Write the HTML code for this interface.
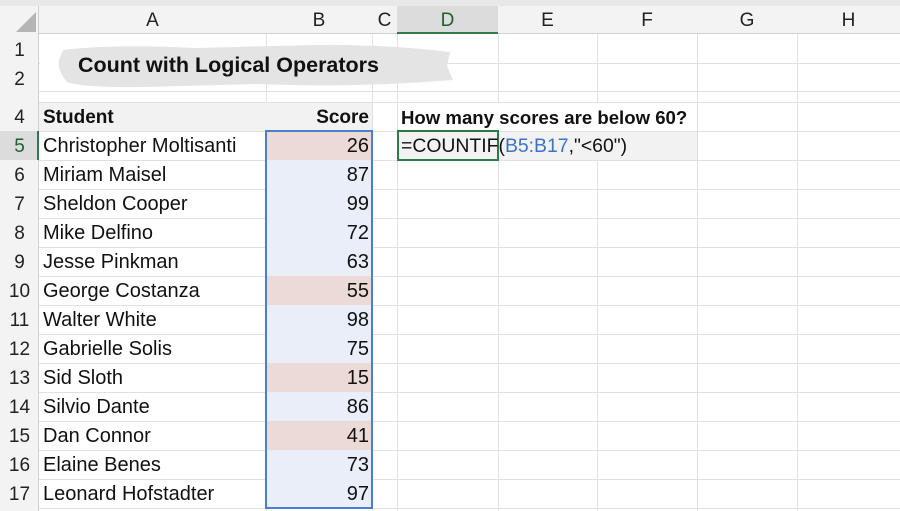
<!DOCTYPE html>
<html><head><style>
*{margin:0;padding:0;box-sizing:border-box}
body{width:900px;height:511px;overflow:hidden;background:#fff;font-family:"Liberation Sans",sans-serif;position:relative;color:#111}
.a{position:absolute}
.vl{position:absolute;top:6px;bottom:0;width:1px;background:#e1e1e1}
.hl{position:absolute;left:0;right:0;height:1px;background:#e1e1e1}
.ch{position:absolute;top:6px;height:28px;font-size:19px;line-height:30px;text-align:center;color:#222}
.rh{position:absolute;left:0;width:39px;font-size:19px;text-align:center;color:#222;height:29px;line-height:31px}
.c{position:absolute;font-size:20px;height:29px;line-height:31px;white-space:nowrap}
</style></head><body>
<div class="a" style="left:0;top:0;width:900px;height:6px;background:#e8e8e8"></div>
<div class="vl" style="left:266px"></div><div class="vl" style="left:372px"></div><div class="vl" style="left:397px"></div><div class="vl" style="left:498px"></div><div class="vl" style="left:597px"></div><div class="vl" style="left:697px"></div><div class="vl" style="left:797px"></div>
<div class="hl" style="top:63px"></div><div class="hl" style="top:91px"></div><div class="hl" style="top:102px"></div><div class="hl" style="top:131px"></div><div class="hl" style="top:160px"></div><div class="hl" style="top:189px"></div><div class="hl" style="top:218px"></div><div class="hl" style="top:247px"></div><div class="hl" style="top:276px"></div><div class="hl" style="top:305px"></div><div class="hl" style="top:334px"></div><div class="hl" style="top:363px"></div><div class="hl" style="top:392px"></div><div class="hl" style="top:421px"></div><div class="hl" style="top:450px"></div><div class="hl" style="top:479px"></div><div class="hl" style="top:508px"></div>
<div class="a" style="left:0;top:6px;width:900px;height:28px;background:#f3f3f3;border-bottom:1px solid #cfcfcf"></div>
<div class="a" style="left:0;top:6px;width:39px;height:505px;background:#f3f3f3;border-right:1px solid #cfcfcf"></div>
<div class="a" style="left:397px;top:6px;width:101px;height:28px;background:#dcdcdc;border-bottom:2px solid #2f7a48"></div>
<div class="a" style="left:0;top:131px;width:39px;height:29px;background:#dcdcdc;border-right:2px solid #2f7a48"></div>
<svg class="a" style="left:16px;top:12px" width="20" height="20"><polygon points="20,0 20,20 0,20" fill="#b5b5b5"/></svg>
<div class="a" style="left:39px;top:103px;width:333px;height:28px;background:#f2f2f2"></div>
<div class="a" style="left:398px;top:103px;width:298px;height:28px;background:#fff"></div>
<div class="a" style="left:397px;top:132px;width:300px;height:28px;background:#f2f2f2"></div>
<div class="a" style="left:266px;top:131px;width:106px;height:377px;background:#e9eef8"></div>
<div class="a" style="left:266px;top:131px;width:106px;height:29px;background:#ecdad6"></div>
<div class="a" style="left:266px;top:276px;width:106px;height:29px;background:#ecdad6"></div>
<div class="a" style="left:266px;top:363px;width:106px;height:29px;background:#ecdad6"></div>
<div class="a" style="left:266px;top:421px;width:106px;height:29px;background:#ecdad6"></div>
<div class="ch" style="left:39px;width:227px">A</div><div class="ch" style="left:266px;width:106px">B</div><div class="ch" style="left:372px;width:25px">C</div><div class="ch" style="left:397px;width:101px;color:#1e5e33">D</div><div class="ch" style="left:498px;width:99px">E</div><div class="ch" style="left:597px;width:100px">F</div><div class="ch" style="left:697px;width:100px">G</div><div class="ch" style="left:797px;width:103px">H</div>
<div class="rh" style="top:35px">1</div><div class="rh" style="top:64px;height:27px">2</div>
<div class="rh" style="top:102px">4</div><div class="rh" style="top:131px;color:#1e5e33">5</div><div class="rh" style="top:160px">6</div><div class="rh" style="top:189px">7</div><div class="rh" style="top:218px">8</div><div class="rh" style="top:247px">9</div><div class="rh" style="top:276px">10</div><div class="rh" style="top:305px">11</div><div class="rh" style="top:334px">12</div><div class="rh" style="top:363px">13</div><div class="rh" style="top:392px">14</div><div class="rh" style="top:421px">15</div><div class="rh" style="top:450px">16</div><div class="rh" style="top:479px">17</div>
<div class="a" style="left:40px;top:35px;width:226px;height:56px;background:#fff"></div>
<div class="a" style="left:267px;top:35px;width:105px;height:56px;background:#fff"></div>
<svg class="a" style="left:55px;top:40px" width="400" height="52"><path d="M8,10 Q60,4 140,8 L260,5 Q330,4 395,12 L392,26 L398,40 Q300,48 200,44 L90,47 Q30,48 12,42 Q2,30 4,20 Z" fill="#e4e4e4"/></svg>
<div class="a" style="left:78px;top:51px;font-size:21.5px;font-weight:bold;line-height:28px">Count with Logical Operators</div>
<div class="c" style="left:43px;top:102px;font-weight:bold;font-size:19px">Student</div>
<div class="c" style="left:266px;top:102px;width:103px;text-align:right;font-weight:bold;font-size:19px">Score</div>
<div class="c" style="left:401px;top:102px;font-weight:bold;font-size:18.6px">How many scores are below 60?</div>
<div class="c" style="left:43px;top:131px">Christopher Moltisanti</div><div class="c" style="left:266px;top:131px;width:103px;text-align:right">26</div>
<div class="c" style="left:43px;top:160px">Miriam Maisel</div><div class="c" style="left:266px;top:160px;width:103px;text-align:right">87</div>
<div class="c" style="left:43px;top:189px">Sheldon Cooper</div><div class="c" style="left:266px;top:189px;width:103px;text-align:right">99</div>
<div class="c" style="left:43px;top:218px">Mike Delfino</div><div class="c" style="left:266px;top:218px;width:103px;text-align:right">72</div>
<div class="c" style="left:43px;top:247px">Jesse Pinkman</div><div class="c" style="left:266px;top:247px;width:103px;text-align:right">63</div>
<div class="c" style="left:43px;top:276px">George Costanza</div><div class="c" style="left:266px;top:276px;width:103px;text-align:right">55</div>
<div class="c" style="left:43px;top:305px">Walter White</div><div class="c" style="left:266px;top:305px;width:103px;text-align:right">98</div>
<div class="c" style="left:43px;top:334px">Gabrielle Solis</div><div class="c" style="left:266px;top:334px;width:103px;text-align:right">75</div>
<div class="c" style="left:43px;top:363px">Sid Sloth</div><div class="c" style="left:266px;top:363px;width:103px;text-align:right">15</div>
<div class="c" style="left:43px;top:392px">Silvio Dante</div><div class="c" style="left:266px;top:392px;width:103px;text-align:right">86</div>
<div class="c" style="left:43px;top:421px">Dan Connor</div><div class="c" style="left:266px;top:421px;width:103px;text-align:right">41</div>
<div class="c" style="left:43px;top:450px">Elaine Benes</div><div class="c" style="left:266px;top:450px;width:103px;text-align:right">73</div>
<div class="c" style="left:43px;top:479px">Leonard Hofstadter</div><div class="c" style="left:266px;top:479px;width:103px;text-align:right">97</div>
<div class="a" style="left:265px;top:130px;width:108px;height:379px;border:2px solid #4a7fd0"></div>
<div class="a" style="left:397px;top:130px;width:102px;height:31px;border:2px solid #2f7a48"></div>
<div class="c" style="left:401px;top:131px;font-size:19.4px">=COUNTIF(<span style="color:#3b73c8">B5:B17</span>,"&lt;60")</div>
</body></html>
